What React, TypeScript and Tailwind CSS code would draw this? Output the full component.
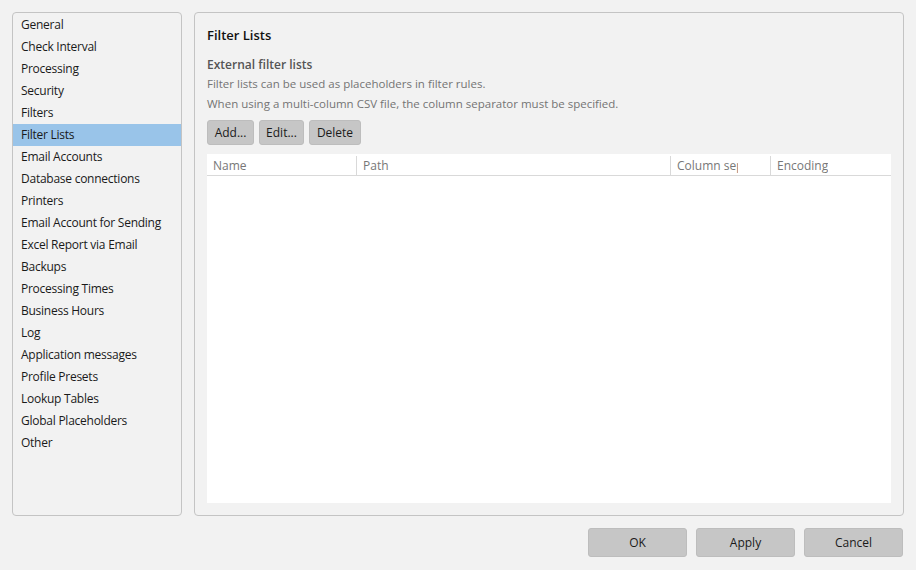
import React from "react"

const NAV_ITEMS = [
  "General",
  "Check Interval",
  "Processing",
  "Security",
  "Filters",
  "Filter Lists",
  "Email Accounts",
  "Database connections",
  "Printers",
  "Email Account for Sending",
  "Excel Report via Email",
  "Backups",
  "Processing Times",
  "Business Hours",
  "Log",
  "Application messages",
  "Profile Presets",
  "Lookup Tables",
  "Global Placeholders",
  "Other",
]

const COLUMNS = [
  { label: "Name", width: "w-[150px]" },
  { label: "Path", width: "w-[314px]" },
  { label: "Column sep", width: "w-[100px] pr-[32px]" },
  { label: "Encoding", width: "flex-1" },
]

function ToolButton({ label, width }: { label: string; width: string }) {
  return (
    <button className={`h-[25px] ${width} rounded-[3px] border border-[#bdbdbd] bg-[#c6c6c6] text-[12px] text-[#1a1a1a]`}>
      {label}
    </button>
  )
}

function DialogButton({ label }: { label: string }) {
  return (
    <button className="h-[29px] w-[99px] rounded-[3px] border border-[#bdbdbd] bg-[#c6c6c6] text-[12px] text-[#1a1a1a]">
      {label}
    </button>
  )
}

export default function App() {
  return (
    <div
      className="flex h-[570px] w-[916px] flex-col bg-[#f2f2f2] text-[11.5px] text-[#1a1a1a]"
      style={{ fontFamily: '"Open Sans", "Noto Sans", sans-serif' }}
    >
      <div className="flex h-[516px] gap-[12px] px-[12px] pt-[12px]">
        {/* Sidebar */}
        <div className="w-[170px] shrink-0 rounded-[4px] border border-[#c4c4c4] pt-[1px]">
          {NAV_ITEMS.map((item) => (
            <div
              key={item}
              className={`flex h-[22px] items-center pl-[8px] text-[12px] tracking-[-0.25px] ${item === "Filter Lists" ? "bg-[#99c4e9]" : ""}`}
            >
              {item}
            </div>
          ))}
        </div>

        {/* Content */}
        <div className="flex flex-1 flex-col rounded-[4px] border border-[#c4c4c4] px-[12px] pb-[12px] pt-[13px]">
          <div className="text-[13px] font-semibold leading-[18px] text-[#111]">Filter Lists</div>
          <div className="mt-[13px] text-[12px] font-semibold leading-[16px] text-[#555]">External filter lists</div>
          <div className="mt-[3px] leading-[16px] text-[#747474]">Filter lists can be used as placeholders in filter rules.</div>
          <div className="mt-[4px] leading-[16px] text-[#747474]">
            When using a multi-column CSV file, the column separator must be specified.
          </div>
          <div className="mt-[8px] flex gap-[5px]">
            <ToolButton label="Add..." width="w-[47px]" />
            <ToolButton label="Edit..." width="w-[45px]" />
            <ToolButton label="Delete" width="w-[52px]" />
          </div>
          <div className="mt-[9px] flex flex-1 flex-col bg-white">
            <div className="flex h-[22px] border-b border-[#d9d9d9] pt-[2px] text-[12px] text-[#777]">
              {COLUMNS.map((col, i) => (
                <div
                  key={col.label}
                  className={`${col.width} flex items-center overflow-hidden whitespace-nowrap pl-[6px] ${i < COLUMNS.length - 1 ? "border-r border-[#d9d9d9]" : ""}`}
                >
                  <span className="overflow-hidden">{col.label}</span>
                </div>
              ))}
            </div>
          </div>
        </div>
      </div>

      {/* Footer buttons */}
      <div className="flex justify-end gap-[9px] pr-[13px] pt-[12px]">
        <DialogButton label="OK" />
        <DialogButton label="Apply" />
        <DialogButton label="Cancel" />
      </div>
    </div>
  )
}
